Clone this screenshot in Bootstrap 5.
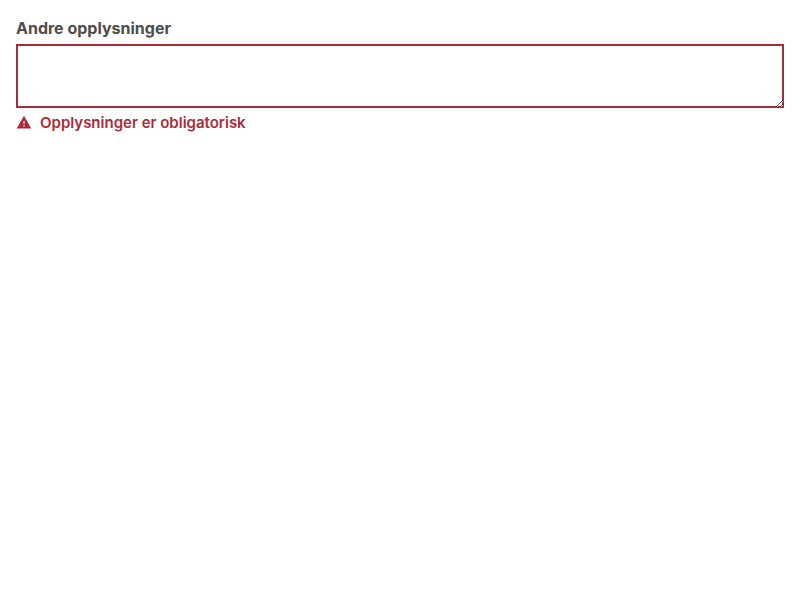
<!DOCTYPE html>
<html lang="nb">
<head>
<meta charset="utf-8">
<meta name="viewport" content="width=device-width, initial-scale=1">
<title>Andre opplysninger</title>
<link href="https://cdn.jsdelivr.net/npm/bootstrap@5.3.0/dist/css/bootstrap.min.css" rel="stylesheet">
<style>
body { font-family: Inter, "Liberation Sans", sans-serif; background: #fff; }
.field-label { color: #4d4d4d; font-size: 16px; line-height: 24px; font-weight: 700; }
.form-control.field-input { height: 64px; min-height: 64px; border: 0; box-shadow: inset 0 0 0 2px #a92b39; border-radius: 0; }
.field-error { color: #a92b39; font-size: 15px; line-height: 22px; font-weight: 600; }
</style>
</head>
<body>
<main class="p-3">
<form novalidate>
<label for="info" class="field-label d-block mb-1">Andre opplysninger</label>
<textarea id="info" class="form-control field-input d-block" aria-invalid="true" aria-describedby="info-error"></textarea>
<div id="info-error" class="field-error d-flex align-items-center gap-2 pt-1">
<svg width="16" height="16" viewBox="0 0 24 24" fill="currentColor" aria-hidden="true"><path d="M1 20.2h22L12 1.2 1 20.2zm12-3h-2v-2h2v2zm0-4h-2v-4h2v4z"/></svg>
<span>Opplysninger er obligatorisk</span>
</div>
</form>
</main>
<script src="https://cdn.jsdelivr.net/npm/bootstrap@5.3.0/dist/js/bootstrap.bundle.min.js"></script>
</body>
</html>
